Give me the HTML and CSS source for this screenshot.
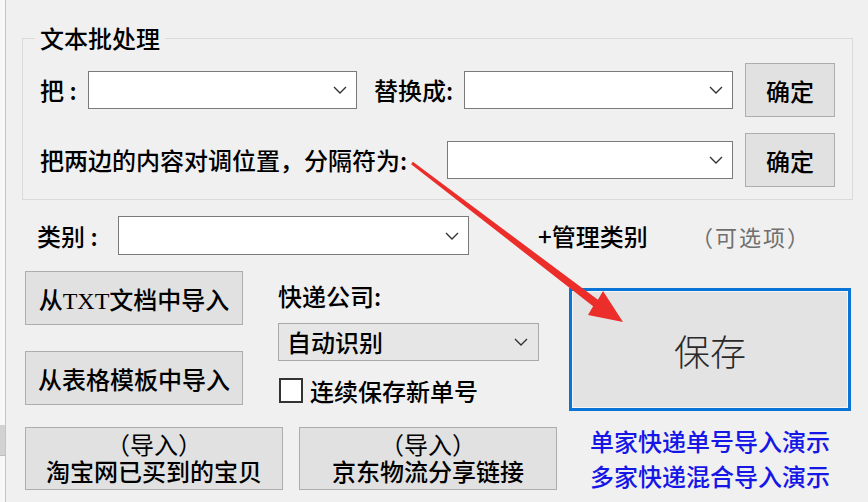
FILE: index.html
```html
<!DOCTYPE html>
<html lang="zh-CN">
<head>
<meta charset="utf-8">
<title>批量导入</title>
<link rel="stylesheet" href="styles.css">
</head>
<body>
<div class="edge"><div class="edge-block"></div></div>
<div class="win">
  <fieldset class="group">
    <legend>文本批处理</legend>
    <div class="row r1">
      <span class="lbl w-ba">把 :</span>
      <div class="combo c1"><svg class="chev" viewBox="0 0 14 8"><path d="M1 1 L7 7 L13 1"/></svg></div>
      <span class="lbl w-th">替换成:</span>
      <div class="combo c2"><svg class="chev" viewBox="0 0 14 8"><path d="M1 1 L7 7 L13 1"/></svg></div>
      <button class="btn ok">确定</button>
    </div>
    <div class="row r2">
      <span class="lbl w-swap">把两边的内容对调位置，分隔符为:</span>
      <div class="combo c3"><svg class="chev" viewBox="0 0 14 8"><path d="M1 1 L7 7 L13 1"/></svg></div>
      <button class="btn ok">确定</button>
    </div>
  </fieldset>

  <div class="row cat">
    <span class="lbl w-cat">类别 :</span>
    <div class="combo c4"><svg class="chev" viewBox="0 0 14 8"><path d="M1 1 L7 7 L13 1"/></svg></div>
    <span class="manage">+管理类别</span>
    <span class="opt">（可选项）</span>
  </div>

  <div class="mid">
    <div class="col-left">
      <button class="btn imp txt">从TXT文档中导入</button>
      <button class="btn imp">从表格模板中导入</button>
    </div>
    <div class="col-mid">
      <div class="lbl express">快递公司:</div>
      <div class="combo gray"><span class="val">自动识别</span><svg class="chev" viewBox="0 0 14 8"><path d="M1 1 L7 7 L13 1"/></svg></div>
      <label class="chk"><span class="box"></span><span>连续保存新单号</span></label>
    </div>
    <button class="save">保存</button>
  </div>

  <div class="bottom">
    <button class="btn two"><span class="l1">（导入）</span><span class="l2">淘宝网已买到的宝贝</span></button>
    <button class="btn two"><span class="l1">（导入）</span><span class="l2">京东物流分享链接</span></button>
    <div class="links">
      <a class="link">单家快递单号导入演示</a>
      <a class="link">多家快递混合导入演示</a>
    </div>
  </div>
</div>
<svg class="arrow" viewBox="0 0 868 502" width="868" height="502">
  <polygon points="412.9,161.8 597.9,299.8 603,291 623,322 588,315 593.1,306.2 411.1,164.2"/>
</svg>
</body>
</html>
```

FILE: styles.css
```css
* { box-sizing: border-box; }

html, body {
  margin: 0;
  padding: 0;
  width: 868px;
  height: 502px;
  overflow: hidden;
}

body {
  position: relative;
  display: flex;
  background: #f8f8f8;
  font-family: "Noto Sans CJK SC", "Microsoft YaHei", sans-serif;
  font-size: 24px;
  font-weight: 500;
  color: #000;
}

.edge {
  width: 5px;
  flex: none;
}
.edge-block {
  margin-top: 425px;
  height: 31px;
  background: #d2d2d2;
  border-bottom: 1px solid #bdbdbd;
}

.win {
  flex: 1;
  height: 502px;
  background: #f0f0f0;
  border-left: 1px solid #c4c4c4;
}

/* group box */
.group {
  margin: 25px 0 0 16px;
  width: 831px;
  border: 1px solid #dadada;
  padding: 0 16px 12px 17px;
}
.group legend {
  margin-left: -5px;
  padding: 0 5px;
  line-height: 26px;
  font-size: 24px;
}

.row {
  display: flex;
  align-items: center;
}
.r1 { margin-top: 12px; }
.r2 { margin-top: 16px; }

.lbl {
  line-height: 30px;
  white-space: nowrap;
  flex: none;
}
.w-ba { width: 48px; }
.w-th { width: 90px; margin-left: 17px; }
.w-swap { width: 407px; }
.w-cat { width: 81px; }

.combo {
  flex: none;
  height: 38px;
  background: #fff;
  border: 1px solid #7a7a7a;
  display: flex;
  align-items: center;
  justify-content: flex-end;
  padding-right: 9px;
}
.c1, .c2 { width: 269px; }
.c3 { width: 286px; }
.c4 { width: 351px; height: 39px; }

.chev {
  width: 14px;
  height: 8px;
  fill: none;
  stroke: #333;
  stroke-width: 1.4;
}

.btn {
  flex: none;
  font-family: inherit;
  font-size: 24px;
  font-weight: 500;
  color: #000;
  background: #e1e1e1;
  border: 1px solid #adadad;
  padding: 0;
  margin: 0;
}
.ok {
  width: 90px;
  height: 54px;
  margin-left: 12px;
}

/* category row */
.cat {
  margin-top: 16px;
  padding-left: 31px;
}
.manage {
  margin-left: 69px;
  width: 153px;
  line-height: 30px;
  flex: none;
}
.opt {
  font-size: 22px;
  font-weight: 400;
  letter-spacing: 2px;
  color: #6f6f6f;
  line-height: 30px;
}

/* middle area */
.mid {
  display: flex;
  align-items: flex-start;
  margin-top: 16px;
  padding-left: 19px;
  height: 140px;
}
.col-left {
  width: 218px;
  display: flex;
  flex-direction: column;
  gap: 26px;
}
.imp {
  width: 218px;
  height: 54px;
}
.txt { font-family: "Liberation Serif", "Noto Sans CJK SC", serif; }

.col-mid {
  margin-left: 35px;
  width: 261px;
  display: flex;
  flex-direction: column;
}
.express { margin-top: 10px; }
.gray {
  margin-top: 12px;
  width: 261px;
  background: #e6e6e6;
  border-color: #a9a9a9;
  justify-content: space-between;
  padding: 0 10px 0 8px;
}
.val { line-height: 30px; }

.chk {
  margin-top: 16px;
  height: 27px;
  display: flex;
  align-items: center;
  padding-left: 1px;
  line-height: 27px;
}
.box {
  width: 24px;
  height: 25px;
  border: 2px solid #333;
  background: #fff;
  margin-right: 7px;
  flex: none;
}

.save {
  margin: 17px 0 0 30px;
  width: 282px;
  height: 123px;
  border: 3px solid #0a74d6;
  box-shadow: inset 0 0 0 1px #f6f6f6;
  background: #e3e3e3;
  font-family: inherit;
  font-size: 36px;
  font-weight: 300;
  color: #2a2a2a;
  padding: 0;
}

/* bottom row */
.bottom {
  display: flex;
  align-items: flex-start;
  margin-top: 16px;
  padding-left: 19px;
}
.two {
  width: 258px;
  height: 63px;
  display: flex;
  flex-direction: column;
  align-items: center;
  justify-content: center;
  padding-bottom: 3px;
}
.two .l1,
.two .l2 {
  display: block;
  line-height: 27px;
  height: 27px;
}
.two .l1 { font-weight: 400; }
.two + .two { margin-left: 16px; }

.links {
  margin: -4px 0 0 33px;
  display: flex;
  flex-direction: column;
}
.link {
  color: #1616e6;
  line-height: 35px;
  white-space: nowrap;
}

/* red annotation arrow */
.arrow {
  position: absolute;
  left: 0;
  top: 0;
  pointer-events: none;
}
.arrow polygon {
  fill: #ec2e2b;
}
```
